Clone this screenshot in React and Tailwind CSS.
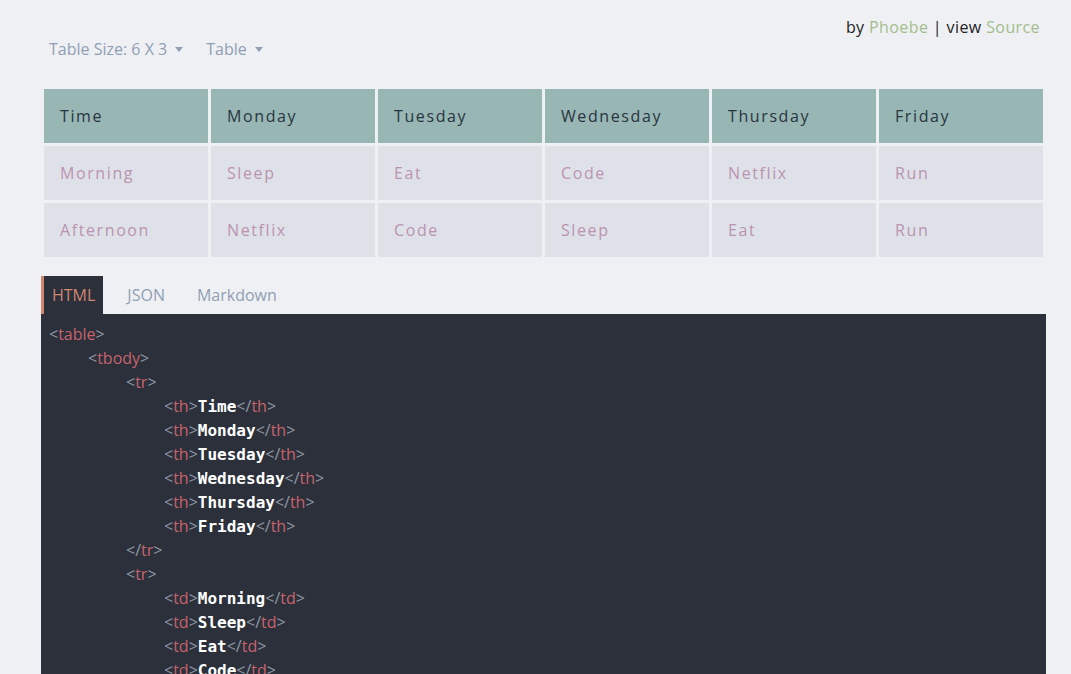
import React from 'react';

const days = ['Time', 'Monday', 'Tuesday', 'Wednesday', 'Thursday', 'Friday'];
const rows = [
  ['Morning', 'Sleep', 'Eat', 'Code', 'Netflix', 'Run'],
  ['Afternoon', 'Netflix', 'Code', 'Sleep', 'Eat', 'Run'],
];

const indents = ['pl-0', 'pl-[39px]', 'pl-[77px]', 'pl-[115px]'];

function Caret() {
  return <span className="inline-block ml-2 mb-[3px] align-middle w-0 h-0 border-l-[4px] border-r-[4px] border-t-[5px] border-l-transparent border-r-transparent border-t-[#909fb3]" />;
}

function Tag({ name, children, level }) {
  return (
    <div className={`${indents[level]} h-6 leading-6 whitespace-nowrap`}>
      <span className="text-[#8f98a6]">&lt;</span>
      <span className="text-[#c8636c]">{name}</span>
      <span className="text-[#8f98a6]">&gt;</span>
      {children !== undefined && (
        <>
          <span className="text-white font-bold font-['DejaVu_Sans_Mono',monospace] text-[16px]">{children}</span>
          <span className="text-[#8f98a6]">&lt;/</span>
          <span className="text-[#c8636c]">{name}</span>
          <span className="text-[#8f98a6]">&gt;</span>
        </>
      )}
    </div>
  );
}

function Close({ name, level }) {
  return (
    <div className={`${indents[level]} h-6 leading-6`}>
      <span className="text-[#8f98a6]">&lt;/</span>
      <span className="text-[#c8636c]">{name}</span>
      <span className="text-[#8f98a6]">&gt;</span>
    </div>
  );
}

export default function App() {
  return (
    <div className="min-h-screen h-[674px] overflow-hidden bg-[#eff0f4] font-['Open_Sans',sans-serif] text-[16px]">
      <div className="w-[1005px] ml-[41px]">
        {/* header */}
        <div className="relative h-[86px]">
          <div className="absolute right-[6px] top-[15px] text-[#222] leading-6 tracking-[0.4px]">
            by <span className="text-[#a3be8c]">Phoebe</span> | view <span className="text-[#a3be8c]">Source</span>
          </div>
          <div className="flex pt-[37px] pl-[8px] text-[#909fb3] leading-6">
            <span>Table Size: 6 X 3<Caret /></span>
            <span className="ml-[23px]">Table<Caret /></span>
          </div>
        </div>

        {/* table */}
        <table className="w-[1005px] border-separate border-spacing-[3px] table-fixed">
          <thead>
            <tr>
              {days.map((d) => (
                <th key={d} className="bg-[#97b6b4] h-[54px] text-left font-normal pl-4 text-[#2a3441] tracking-[1.6px]">{d}</th>
              ))}
            </tr>
          </thead>
          <tbody>
            {rows.map((r, i) => (
              <tr key={i}>
                {r.map((c, j) => (
                  <td key={j} className="bg-[#dfe1e8] h-[54px] pl-4 text-[#bb93b1] tracking-[1.6px]">{c}</td>
                ))}
              </tr>
            ))}
          </tbody>
        </table>

        {/* tabs */}
        <div className="flex mt-[16px] h-[38px] items-stretch">
          <div className="bg-[#2b303b] border-l-[3px] border-[#d08770] text-[#d08770] pl-[8px] pr-[8px] flex items-center">HTML</div>
          <div className="text-[#909fb3] ml-[24px] flex items-center">JSON</div>
          <div className="text-[#909fb3] ml-[32px] flex items-center">Markdown</div>
        </div>

        {/* code */}
        <div className="bg-[#2b303b] h-[400px] pl-[8px] pt-[8px]">
          <Tag name="table" level={0} />
          <Tag name="tbody" level={1} />
          <Tag name="tr" level={2} />
          {days.map((d) => <Tag key={d} name="th" level={3}>{d}</Tag>)}
          <Close name="tr" level={2} />
          <Tag name="tr" level={2} />
          {rows[0].map((d, i) => <Tag key={i} name="td" level={3}>{d}</Tag>)}
          <Close name="tr" level={2} />
        </div>
      </div>
    </div>
  );
}
